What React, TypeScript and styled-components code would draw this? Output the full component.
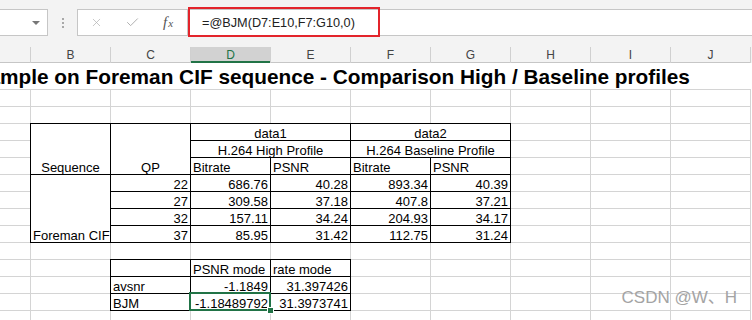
import styled, { createGlobalStyle, css } from 'styled-components';
import { X, Check } from 'lucide-react';

const GlobalStyle = createGlobalStyle`
  html, body {
    margin: 0;
    padding: 0;
    background: #fff;
  }
  body {
    font-family: 'Liberation Sans', Arial, sans-serif;
  }
`;

const GRID_COLUMNS = '31px repeat(9, 80px)';
const HEADERS = ['', 'B', 'C', 'D', 'E', 'F', 'G', 'H', 'I', 'J'];
const ACTIVE_COLUMN = 'D';
const BODY_ROWS = 14;

type Align = 'left' | 'center' | 'right';

interface CellData {
  text?: string;
  align?: Align;
  colSpan?: number;
  rowSpan?: number;
  selected?: boolean;
}

const num = (text: string): CellData => ({ text, align: 'right' });

const profileCells: CellData[] = [
  { text: 'Sequence', align: 'center', rowSpan: 3 },
  { text: 'QP', align: 'center', rowSpan: 3 },
  { text: 'data1', align: 'center', colSpan: 2 },
  { text: 'data2', align: 'center', colSpan: 2 },
  { text: 'H.264 High Profile', align: 'center', colSpan: 2 },
  { text: 'H.264 Baseline Profile', align: 'center', colSpan: 2 },
  { text: 'Bitrate' },
  { text: 'PSNR' },
  { text: 'Bitrate' },
  { text: 'PSNR' },
  { text: 'Foreman CIF', rowSpan: 4 },
  ...[
    ['22', '686.76', '40.28', '893.34', '40.39'],
    ['27', '309.58', '37.18', '407.8', '37.21'],
    ['32', '157.11', '34.24', '204.93', '34.17'],
    ['37', '85.95', '31.42', '112.75', '31.24'],
  ].flatMap((row) => row.map(num)),
];

const resultCells: CellData[] = [
  {},
  { text: 'PSNR mode' },
  { text: 'rate mode' },
  { text: 'avsnr' },
  num('-1.1849'),
  num('31.397426'),
  { text: 'BJM' },
  { ...num('-1.18489792'), selected: true },
  num('31.3973741'),
];

const App = () => {
  return (
    <Page>
      <GlobalStyle />
      <Chrome>
        <NameBox>
          <DropArrow />
        </NameBox>
        <Grip>
          <span />
          <span />
          <span />
        </Grip>
        <ActionBox>
          <Action>
            <X size={13} strokeWidth={1.3} />
          </Action>
          <Action>
            <Check size={15} strokeWidth={1.6} />
          </Action>
          <Action>
            <Fx>
              f<sub>x</sub>
            </Fx>
          </Action>
        </ActionBox>
        <FormulaInput>
          <Highlight />
          =@BJM(D7:E10,F7:G10,0)
        </FormulaInput>
      </Chrome>

      <HeaderRow>
        {HEADERS.map((h, i) => (
          <ColumnHeader key={i} $active={h === ACTIVE_COLUMN}>
            {h}
          </ColumnHeader>
        ))}
      </HeaderRow>

      <Sheet>
        <GridLayer>
          <TitleCell>
            <Title>Example on Foreman CIF sequence - Comparison High / Baseline profiles</Title>
          </TitleCell>
          {Array.from({ length: BODY_ROWS * HEADERS.length }).map((_, i) => (
            <GridCell key={i} />
          ))}
        </GridLayer>

        <ContentLayer>
          <DataTable $cols="2 / 8" $rows="4 / 11" $count={6}>
            {profileCells.map((c, i) => (
              <Cell
                key={i}
                $align={c.align ?? 'left'}
                $colSpan={c.colSpan ?? 1}
                $rowSpan={c.rowSpan ?? 1}
                $selected={!!c.selected}
              >
                {c.text}
              </Cell>
            ))}
          </DataTable>

          <DataTable $cols="3 / 6" $rows="12 / 15" $count={3}>
            {resultCells.map((c, i) => (
              <Cell
                key={i}
                $align={c.align ?? 'left'}
                $colSpan={c.colSpan ?? 1}
                $rowSpan={c.rowSpan ?? 1}
                $selected={!!c.selected}
              >
                {c.text}
              </Cell>
            ))}
          </DataTable>
        </ContentLayer>
      </Sheet>

      <Watermark>CSDN @W、H</Watermark>
    </Page>
  );
};

const Page = styled.div`
  position: relative;
  width: 752px;
  height: 320px;
  overflow: hidden;
  background: #fff;
`;

const Chrome = styled.div`
  height: 47px;
  box-sizing: border-box;
  padding-top: 9px;
  display: flex;
  align-items: flex-start;
  background: #f3f3f3;
`;

const NameBox = styled.div`
  width: 50px;
  height: 27px;
  margin-left: -2px;
  box-sizing: border-box;
  border: 1px solid #c6c6c6;
  background: #fff;
  display: flex;
  align-items: center;
  justify-content: flex-end;
  padding-right: 7px;
`;

const DropArrow = styled.span`
  width: 0;
  height: 0;
  border-left: 4px solid transparent;
  border-right: 4px solid transparent;
  border-top: 4px solid #777;
`;

const Grip = styled.div`
  width: 29px;
  height: 27px;
  display: flex;
  flex-direction: column;
  align-items: center;
  justify-content: center;
  gap: 2px;

  span {
    width: 2px;
    height: 2px;
    background: #a8a8a8;
  }
`;

const ActionBox = styled.div`
  width: 110px;
  height: 27px;
  box-sizing: border-box;
  border: 1px solid #c6c6c6;
  border-right: none;
  background: #fff;
  display: flex;
  align-items: center;
`;

const Action = styled.div`
  width: 36px;
  display: flex;
  justify-content: center;
  align-items: center;
  color: #b0b0b0;
`;

const Fx = styled.span`
  font-family: 'Liberation Serif', 'Times New Roman', serif;
  font-style: italic;
  font-size: 15px;
  color: #555;
  line-height: 1;

  sub {
    font-size: 11px;
    vertical-align: baseline;
    margin-left: 1px;
  }
`;

const FormulaInput = styled.div`
  position: relative;
  flex: 1;
  height: 27px;
  box-sizing: border-box;
  border-top: 1px solid #c6c6c6;
  border-bottom: 1px solid #c6c6c6;
  border-left: 1px solid #c6c6c6;
  background: #fff;
  display: flex;
  align-items: center;
  padding-left: 14px;
  font-size: 12.7px;
  color: #222;
`;

const Highlight = styled.div`
  position: absolute;
  left: 0;
  top: -3px;
  width: 192px;
  height: 30px;
  box-sizing: border-box;
  border: 2px solid #e3242b;
`;

const HeaderRow = styled.div`
  display: grid;
  grid-template-columns: ${GRID_COLUMNS};
  height: 16px;
  background: #f3f3f3;
`;

const ColumnHeader = styled.div<{ $active: boolean }>`
  text-align: center;
  font-size: 12px;
  line-height: 16px;
  color: #444;
  border-right: 1px solid #d0d0d0;
  box-shadow: inset 0 -1px 0 #c6c6c6;

  ${(p) =>
    p.$active &&
    css`
      background: #d2d2d2;
      color: #217346;
      box-shadow: inset 0 -2px 0 #217346;
    `}
`;

const Sheet = styled.div`
  display: grid;
`;

const layer = css`
  grid-area: 1 / 1;
  display: grid;
  grid-template-columns: ${GRID_COLUMNS};
  grid-template-rows: 27px repeat(${BODY_ROWS}, 17px);
`;

const GridLayer = styled.div`
  ${layer}
`;

const ContentLayer = styled.div`
  ${layer}
`;

const TitleCell = styled.div`
  grid-column: 1 / -1;
  border-bottom: 1px solid #d4d4d4;
  overflow: hidden;
  display: flex;
  align-items: flex-end;
  padding-bottom: 2px;
`;

const Title = styled.span`
  margin-left: -37px;
  font-size: 20.8px;
  font-weight: bold;
  line-height: 21px;
  white-space: nowrap;
  color: #000;
`;

const GridCell = styled.div`
  border-right: 1px solid #d4d4d4;
  border-bottom: 1px solid #d4d4d4;
`;

const DataTable = styled.div<{ $cols: string; $rows: string; $count: number }>`
  grid-column: ${(p) => p.$cols};
  grid-row: ${(p) => p.$rows};
  margin: -1px 0 0 -1px;
  display: grid;
  grid-template-columns: repeat(${(p) => p.$count}, 80px);
  grid-auto-rows: 17px;
  border-top: 1px solid #000;
  border-left: 1px solid #000;
  background: #fff;
`;

const justify = { left: 'flex-start', center: 'center', right: 'flex-end' };

const Cell = styled.div<{ $align: Align; $colSpan: number; $rowSpan: number; $selected: boolean }>`
  grid-column: span ${(p) => p.$colSpan};
  grid-row: span ${(p) => p.$rowSpan};
  border-right: 1px solid #000;
  border-bottom: 1px solid #000;
  display: flex;
  align-items: flex-end;
  justify-content: ${(p) => justify[p.$align]};
  padding: 0 2px;
  font-size: 13px;
  line-height: 13px;
  color: #000;
  white-space: nowrap;

  ${(p) =>
    p.$selected &&
    css`
      position: relative;
      z-index: 1;

      &::after {
        content: '';
        position: absolute;
        left: -2px;
        top: -2px;
        right: -1px;
        bottom: -1px;
        border: 2px solid #217346;
      }

      &::before {
        content: '';
        position: absolute;
        right: -4px;
        bottom: -4px;
        width: 5px;
        height: 5px;
        background: #217346;
        border: 1px solid #fff;
        z-index: 2;
      }
    `}
`;

const Watermark = styled.div`
  position: absolute;
  right: 15px;
  bottom: 12px;
  font-family: 'Liberation Sans', 'Noto Sans CJK SC', sans-serif;
  font-size: 17px;
  color: #a4a4a4;
  white-space: nowrap;
`;

export default App;
